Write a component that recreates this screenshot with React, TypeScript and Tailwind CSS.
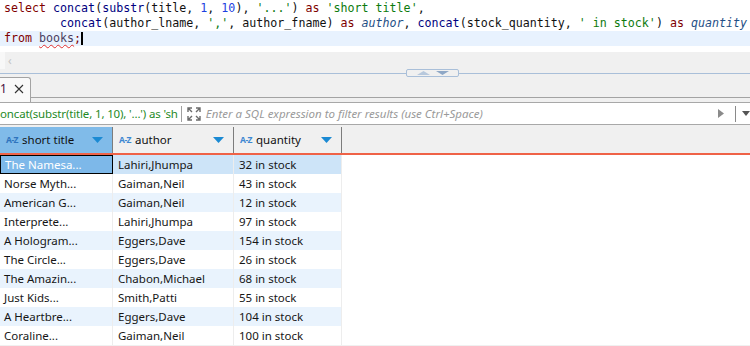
import React from "react";

const mono = { fontFamily: '"DejaVu Sans Mono", "Liberation Mono", monospace' };

interface Row {
  title: string;
  author: string;
  qty: string;
}

const rows: Row[] = [
  { title: "The Namesa...", author: "Lahiri,Jhumpa", qty: "32 in stock" },
  { title: "Norse Myth...", author: "Gaiman,Neil", qty: "43 in stock" },
  { title: "American G...", author: "Gaiman,Neil", qty: "12 in stock" },
  { title: "Interprete...", author: "Lahiri,Jhumpa", qty: "97 in stock" },
  { title: "A Hologram...", author: "Eggers,Dave", qty: "154 in stock" },
  { title: "The Circle...", author: "Eggers,Dave", qty: "26 in stock" },
  { title: "The Amazin...", author: "Chabon,Michael", qty: "68 in stock" },
  { title: "Just Kids...", author: "Smith,Patti", qty: "55 in stock" },
  { title: "A Heartbre...", author: "Eggers,Dave", qty: "104 in stock" },
  { title: "Coraline...", author: "Gaiman,Neil", qty: "100 in stock" },
];

function SortArrow() {
  return (
    <svg width="11" height="6" viewBox="0 0 11 6">
      <polygon points="0,0 11,0 5.5,6" fill="#1b8ad3" />
    </svg>
  );
}

function HeaderCell({ label, width, active }: { label: string; width: string; active?: boolean }) {
  return (
    <div
      className={`${width} h-full flex items-center pl-[6px] pr-[9px] border-r border-[#7c7c7c] ${
        active ? "bg-[#80bbe9]" : "bg-[#f0f0f0]"
      }`}
    >
      <span className={`text-[8.5px] font-bold tracking-[-0.5px] mr-[4px] ${active ? "text-[#2f74bd]" : "text-[#3d88d2]"}`}>
        A-Z
      </span>
      <span className="text-[11.5px] text-[#111]">{label}</span>
      <span className="ml-auto flex">
        <SortArrow />
      </span>
    </div>
  );
}

function ExpandIcon() {
  return (
    <svg width="16" height="16" viewBox="0 0 16 16" fill="none" stroke="#6b6b6b" strokeWidth="1.4">
      <path d="M2 6V2h4M2 2l4 4" />
      <path d="M14 6V2h-4M14 2l-4 4" />
      <path d="M2 10v4h4M2 14l4-4" />
      <path d="M14 10v4h-4M14 14l-4-4" />
    </svg>
  );
}

export default function App() {
  return (
    <div
      className="w-[750px] h-[346px] overflow-hidden bg-[#f0f0f0]"
      style={{ fontFamily: '"Noto Sans", "Open Sans", sans-serif' }}
    >
      {/* SQL editor */}
      <div className="bg-white h-[52px] pt-[1px] text-[11.65px] text-[#111]" style={mono}>
        <div className="h-[15px] leading-[15px] whitespace-pre px-[4px]">
          <span className="text-[#7f0000]">select</span> <span className="text-[#000080]">concat</span>(
          <span className="text-[#000080]">substr</span>(title, <span className="text-[#1c3fe0]">1</span>,{" "}
          <span className="text-[#1c3fe0]">10</span>), <span className="text-[#0d7a0d]">'...'</span>){" "}
          <span className="text-[#7f0000]">as</span> <span className="text-[#0d7a0d]">'short title'</span>,
        </div>
        <div className="h-[15px] leading-[15px] whitespace-pre px-[4px]">
          {"        "}
          <span className="text-[#000080]">concat</span>(author_lname, <span className="text-[#0d7a0d]">','</span>,
          author_fname) <span className="text-[#7f0000]">as</span>{" "}
          <span className="italic text-[#1f4f86]">author</span>, <span className="text-[#000080]">concat</span>
          (stock_quantity, <span className="text-[#0d7a0d]">' in stock'</span>){" "}
          <span className="text-[#7f0000]">as</span> <span className="italic text-[#1f4f86]">quantity</span>
        </div>
        <div className="h-[15px] leading-[15px] whitespace-pre px-[4px] bg-[#e8f2fe]">
          <span className="text-[#7f0000]">from</span>{" "}
          <span className="text-[#4b4060] underline decoration-wavy decoration-[#e03030] decoration-[1px] underline-offset-2">
            books
          </span>
          <span className="text-[#7f0000]">;</span>
          <span className="inline-block align-middle w-[2px] h-[13px] bg-black" />
        </div>
      </div>

      {/* horizontal scroll */}
      <div className="h-[17px] flex items-center">
        <span className="w-[5px] h-full bg-[#f8f8f8]" />
        <span className="ml-[3px] text-[12px] leading-none text-[#c4c4c4]">‹</span>
      </div>

      {/* split handle */}
      <div className="h-[8px] flex items-center">
        <div className="w-[406px] h-px bg-[#a9bfd9]" />
        <div className="w-[53px] h-[8px] border border-[#a9bfd9] rounded-[2px] flex items-center justify-center gap-[6px]">
          <svg width="13" height="4" viewBox="0 0 13 4">
            <polygon points="0,4 13,4 6.5,0" fill="#b7c8dc" />
          </svg>
          <svg width="13" height="4" viewBox="0 0 13 4">
            <polygon points="0,0 13,0 6.5,4" fill="#8ea7c6" />
          </svg>
        </div>
        <div className="flex-1 h-px bg-[#a9bfd9]" />
      </div>

      {/* result tabs */}
      <div className="h-[25px] flex">
        <div className="w-[31px] h-full bg-[#f9f9f9] border-t border-r border-[#a3a3a3] rounded-tr-[3px] flex items-start pt-[4px]">
          <span className="text-[12px] leading-[14px] text-[#4a1040]">1</span>
          <svg className="ml-[7px] mt-[2px]" width="10" height="10" viewBox="0 0 10 10" stroke="#333" strokeWidth="1.1">
            <path d="M1 1l8 8M9 1l-8 8" />
          </svg>
        </div>
        <div className="flex-1 h-[21px] border-b border-[#a3a3a3]" />
      </div>

      {/* filter bar */}
      <div className="h-[23px] bg-white border-y border-[#a8a8a8] flex items-center text-[11.5px]">
        <span className="text-[#1f8a1f] whitespace-pre tracking-[-0.15px]">oncat(substr(title, 1, 10), '...') as 'sh</span>
        <span className="ml-[3px] w-px h-[16px] bg-[#a0a0a0]" />
        <span className="ml-[4px] flex">
          <ExpandIcon />
        </span>
        <span className="ml-[4px] italic text-[#9a9a9a] whitespace-pre">
          Enter a SQL expression to filter results (use Ctrl+Space)
        </span>
        <span className="ml-auto flex items-center">
          <svg width="6" height="9" viewBox="0 0 6 9">
            <polygon points="0,0 6,4.5 0,9" fill="#8a8a8a" />
          </svg>
          <span className="ml-[11px] w-px h-[16px] bg-[#8a8a8a]" />
          <svg className="ml-[6px]" width="8" height="5" viewBox="0 0 8 5">
            <polygon points="0,0 8,0 4,5" fill="#555" />
          </svg>
        </span>
      </div>

      {/* grid */}
      <div className="mt-[2px]">
        <div className="h-[28px] flex border-b-2 border-[#ef6247]">
          <HeaderCell label="short title" width="w-[113px]" active />
          <HeaderCell label="author" width="w-[121px]" />
          <HeaderCell label="quantity" width="w-[108px]" />
          <div className="flex-1 bg-[#f0f0f0]" />
        </div>
        <div className="bg-white text-[11.5px] text-[#161616]">
          {rows.map((r, i) => {
            const selected = i === 0;
            const band = selected ? "bg-[#cde4f8]" : i % 2 === 0 ? "bg-[#e9f3fd]" : "bg-white";
            return (
              <div key={i} className="h-[19px] flex">
                <div
                  className={`w-[113px] h-full flex items-center pl-[4px] ${
                    selected
                      ? "bg-[#7db8e9] text-white border border-black"
                      : `${band} border-r border-[#ededed]`
                  }`}
                >
                  {r.title}
                </div>
                <div className={`w-[121px] h-full flex items-center pl-[5px] border-r border-[#ededed] ${band}`}>
                  {r.author}
                </div>
                <div className={`w-[108px] h-full flex items-center pl-[5px] border-r border-[#ededed] ${band}`}>
                  {r.qty}
                </div>
              </div>
            );
          })}
        </div>
      </div>
    </div>
  );
}
